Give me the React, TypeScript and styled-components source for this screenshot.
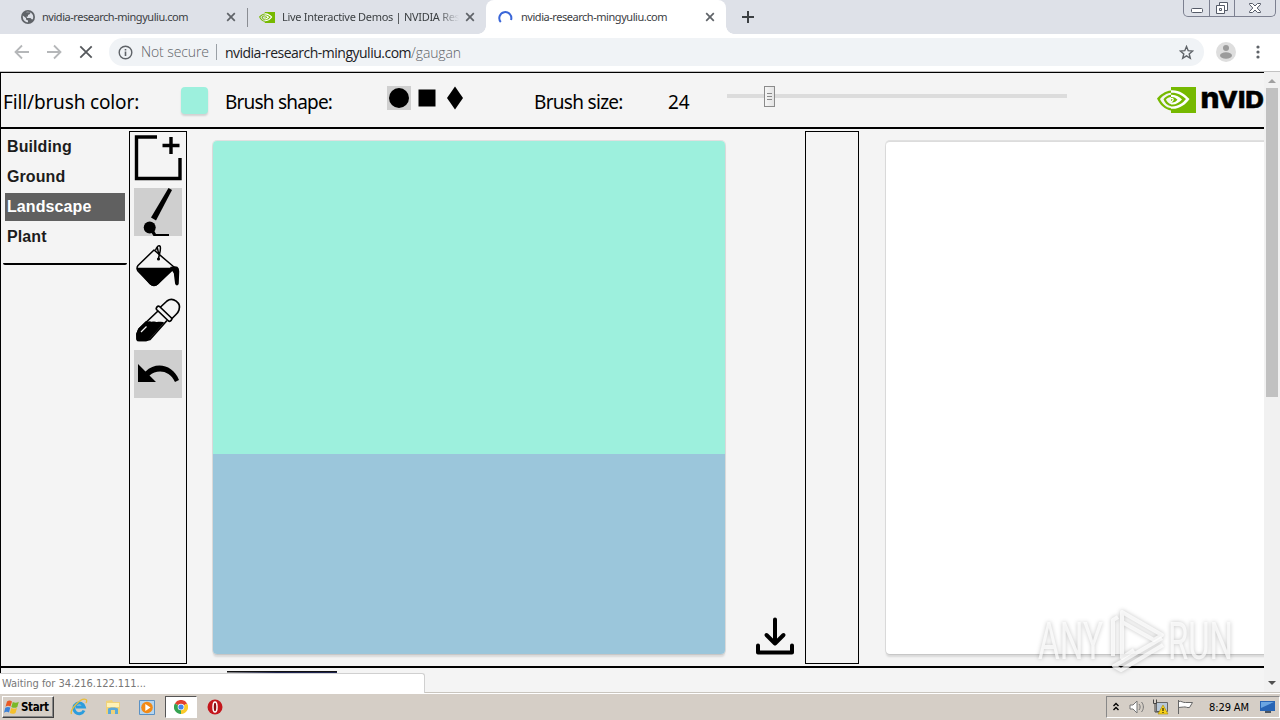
import React from 'react';
import styled, { createGlobalStyle } from 'styled-components';

const GlobalStyle = createGlobalStyle`
    * {
        box-sizing: border-box;
    }

    body {
        margin: 0;
        overflow: hidden;
        font-family: 'DejaVu Sans Condensed', 'DejaVu Sans', sans-serif;
    }

    svg {
        display: block;
        flex: none;
    }
`;

const Screen = styled.div`
    position: relative;
    width: 1280px;
    height: 720px;
    display: flex;
    flex-direction: column;
    overflow: hidden;
    background: #f4f4f4;
`;

/* browser chrome */

const TabStrip = styled.div`
    height: 34px;
    flex: none;
    display: flex;
    background: #dee1e8;
`;

const Tab = styled.div<{ $width: number; $active?: boolean; $pad: number }>`
    position: relative;
    width: ${(p) => p.$width}px;
    height: 34px;
    padding: 0 11px 0 ${(p) => p.$pad}px;
    display: flex;
    align-items: center;
    background: ${(p) => (p.$active ? '#fff' : 'transparent')};
    border-radius: 8px 8px 0 0;

    &::before,
    &::after {
        content: '';
        display: ${(p) => (p.$active ? 'block' : 'none')};
        position: absolute;
        bottom: 0;
        width: 8px;
        height: 8px;
    }

    &::before {
        left: -8px;
        background: radial-gradient(circle at 0 0, transparent 7.5px, #fff 8px);
    }

    &::after {
        right: -8px;
        background: radial-gradient(circle at 100% 0, transparent 7.5px, #fff 8px);
    }
`;

const TabTitle = styled.span<{ $fade?: boolean; $spacing: number }>`
    flex: 1;
    margin-left: 7px;
    overflow: hidden;
    white-space: nowrap;
    font-family: 'Noto Sans', sans-serif;
    font-size: 11px;
    line-height: 16px;
    letter-spacing: ${(p) => p.$spacing}px;
    color: #3c4043;
    ${(p) => p.$fade && 'mask-image: linear-gradient(90deg, #000 88%, transparent); margin-right: 6px;'}
`;

const TabDivider = styled.div`
    width: 1px;
    height: 19px;
    margin-top: 8px;
    background: #8a8d93;
`;

const NewTab = styled.div`
    display: flex;
    align-items: center;
    padding-left: 16px;
`;

const WindowControls = styled.div`
    display: flex;
    width: 93px;
    height: 17px;
    margin: 0 4px 0 auto;
    border: 1px solid #7c8090;
    border-top: 0;
    border-radius: 0 0 5px 5px;
`;

const WindowButton = styled.div<{ $width: number }>`
    width: ${(p) => p.$width}px;
    display: flex;
    justify-content: center;

    & + & {
        border-left: 1px solid #7c8090;
    }
`;

const Toolbar = styled.div`
    height: 38px;
    flex: none;
    display: flex;
    align-items: center;
    gap: 16px;
    padding: 0 14px 1px 14px;
    background: #fff;
    border-bottom: 1px solid #c2c2c2;
`;

const Omnibox = styled.div`
    width: 1095px;
    height: 28px;
    display: flex;
    align-items: center;
    margin-left: -1px;
    padding: 0 10px 0 9px;
    border-radius: 14px;
    background: #f0f3f6;
    font-family: 'Open Sans', sans-serif;
    font-size: 14px;
    font-weight: 300;
    letter-spacing: -0.1px;
    color: #5f6368;
    white-space: nowrap;

    b {
        font-weight: 400;
        color: #202124;
        letter-spacing: -0.5px;
    }
`;

const NotSecure = styled.span`
    margin-left: 8px;
    padding-right: 7px;
    border-right: 1px solid #9aa0a6;
    margin-right: 8px;
    line-height: 16px;
`;

const Url = styled.span`
    flex: 1;
`;

const ToolbarEnd = styled.div`
    display: flex;
    align-items: center;
    gap: 18px;
    margin-left: -4px;
`;

/* page */

const Viewport = styled.div`
    height: 620px;
    flex: none;
    display: flex;
`;

const Page = styled.div`
    width: 1264px;
    height: 620px;
    overflow: hidden;
    border-left: 1px solid #000;
    border-top: 1px solid #000;
    background: #f4f4f4;
`;

const Controls = styled.div`
    height: 56px;
    display: flex;
    border-bottom: 2px solid #000;
`;

const ControlLabel = styled.span<{ $width: number; $spacing?: number }>`
    width: ${(p) => p.$width}px;
    padding: 15px 0 0 2px;
    flex: none;
    font-family: 'Noto Sans', sans-serif;
    font-size: 19px;
    line-height: 28px;
    letter-spacing: ${(p) => p.$spacing ?? 0}px;
    white-space: nowrap;
    color: #000;
`;

const Swatch = styled.div`
    width: 27px;
    height: 27px;
    margin: 14px 15px 0 0;
    flex: none;
    border-radius: 4px;
    background: #9df0dd;
    box-shadow: 0 2px 2px rgba(0, 0, 0, 0.14);
`;

const Shapes = styled.div`
    display: flex;
    width: 145px;
    padding-top: 13px;
    gap: 4px;
`;

const Shape = styled.div<{ $selected?: boolean }>`
    width: 24px;
    height: 24px;
    background: ${(p) => (p.$selected ? '#cfcfcf' : 'transparent')};
`;

const Slider = styled.div`
    width: 340px;
    height: 22px;
    margin: 12px 0 0 26px;
    display: flex;
    align-items: center;
    flex: none;
    background: linear-gradient(#dcdcdc, #dcdcdc) center / 100% 4px no-repeat;
`;

const SliderThumb = styled.div`
    width: 11px;
    height: 21px;
    margin-left: 37px;
    padding: 6px 2px;
    display: flex;
    flex-direction: column;
    justify-content: space-between;
    border: 1px solid #8b8b8b;
    background: linear-gradient(90deg, #f6f6f6, #e4e4e4);

    i {
        height: 1px;
        background: #8b8b8b;
    }
`;

const Brand = styled.div`
    margin: 14px 0 0 90px;
`;

const Workspace = styled.div`
    height: 539px;
    display: flex;
    border-bottom: 2px solid #000;
`;

const Categories = styled.div`
    width: 124px;
    height: 134px;
    margin: 2px 2px 0 2px;
    padding: 2px 2px 0;
    flex: none;
    border-bottom: 2px solid #000;
    border-radius: 2px;
`;

const Category = styled.div<{ $selected?: boolean }>`
    height: 28px;
    margin-bottom: 2px;
    padding-left: 2px;
    font: bold 16px/27px 'Liberation Sans', Arial, sans-serif;
    letter-spacing: 0.1px;
    color: ${(p) => (p.$selected ? '#fff' : '#1c1c1c')};
    background: ${(p) => (p.$selected ? '#606060' : 'transparent')};
`;

const ToolColumn = styled.div<{ $width: number }>`
    width: ${(p) => p.$width}px;
    height: 533px;
    margin-top: 2px;
    padding: 2px 4px;
    display: flex;
    flex-direction: column;
    gap: 6px;
    flex: none;
    border: 1px solid #000;
`;

const Tool = styled.div<{ $selected?: boolean }>`
    width: 48px;
    height: 48px;
    background: ${(p) => (p.$selected ? '#cfcfcf' : 'transparent')};
`;

const Canvas = styled.div<{ $left: number; $empty?: boolean }>`
    width: 512px;
    height: 513px;
    margin: 12px 0 0 ${(p) => p.$left}px;
    flex: none;
    border-radius: 4px;
    background: ${(p) => (p.$empty ? '#fff' : 'linear-gradient(#9df0dd 313px, #9bc6db 313px)')};
    box-shadow: 0 3px 2px rgba(0, 0, 0, 0.11), 0 0 0 1px rgba(0, 0, 0, 0.08);
    ${(p) => p.$empty && 'border-top: 1px solid #dcdcdc;'}
`;

const Download = styled.div`
    width: 80px;
    padding: 486px 0 0 29px;
    flex: none;
`;

const Thumbs = styled.div`
    height: 30px;
    padding: 3px 0 0 226px;
`;

const Thumb = styled.div`
    width: 110px;
    height: 30px;
    border-top: 1px solid #111;
    background: linear-gradient(90deg, #888, #1d2450 45%);
`;

const Scrollbar = styled.div`
    width: 16px;
    display: flex;
    flex-direction: column;
    align-items: center;
    justify-content: space-between;
    background: #f1f1f1;
`;

const ScrollThumb = styled.div`
    width: 12px;
    height: 309px;
    margin-bottom: auto;
    background: #c1c1c1;
`;

const Status = styled.div`
    position: absolute;
    left: 0;
    top: 673px;
    width: 425px;
    height: 20px;
    padding-left: 2px;
    border: 1px solid #d0d0d0;
    border-width: 1px 1px 0 0;
    border-radius: 0 3px 0 0;
    background: #fff;
    font-size: 11px;
    line-height: 19px;
    letter-spacing: -0.04px;
    color: #777;
`;

/* desktop */

const Taskbar = styled.div`
    height: 28px;
    flex: none;
    display: flex;
    align-items: center;
    padding: 3px 0 2px 2px;
    border-top: 1px solid #c9c5be;
    box-shadow: inset 0 1px 0 #fff;
    background: #d5cec6;
`;

const StartButton = styled.div`
    width: 52px;
    height: 22px;
    display: flex;
    align-items: center;
    gap: 1px;
    padding-left: 1px;
    border: 1px solid;
    border-color: #fff #404040 #404040 #fff;
    box-shadow: inset -1px -1px 0 #888;
    font: bold 11.5px 'DejaVu Sans Condensed', 'DejaVu Sans', sans-serif;
    letter-spacing: -0.35px;
    color: #000;
`;

const Launchers = styled.div`
    display: flex;
    align-items: center;
    margin-left: 8px;
`;

const Launcher = styled.div<{ $open?: boolean }>`
    width: ${(p) => (p.$open ? 32 : 34)}px;
    height: 22px;
    display: flex;
    align-items: center;
    justify-content: center;
    ${(p) => p.$open && 'background: #fff; border: 1px solid; border-color: #555 #fff #fff #555; margin: 0 1px;'}
`;

const Tray = styled.div`
    width: 174px;
    height: 22px;
    margin: 0 0 0 auto;
    display: flex;
    align-items: center;
    border: 1px solid;
    border-color: #888 #fff #fff #888;
    color: #000;
`;

const Clock = styled.span`
    width: 50px;
    margin-left: 9px;
    flex: none;
    font-size: 11px;
    letter-spacing: -0.1px;
    white-space: nowrap;
`;

const Watermark = styled.svg`
    position: absolute;
    left: 1030px;
    top: 600px;
    filter: drop-shadow(0 0 2px rgba(0, 0, 0, 0.3));
`;

const CloseIcon = () => (
    <svg width='10' height='10' viewBox='0 0 10 10'>
        <path d='M1.2 1.2l7.6 7.6M8.8 1.2L1.2 8.8' stroke='#5f6368' strokeWidth='1.7' />
    </svg>
);

const Globe = () => (
    <svg width='14' height='14' viewBox='0 0 14 14'>
        <circle cx='7' cy='7' r='7' fill='#5f6368' />
        <path d='M1.8 5.5L5 8v1.5l2 1v1.8C4 12.3 1.5 10 1.8 5.5zM5 2.200h4.500L9 4 7 5v1.500H5.500L6 8h3.500l1.500 1.500 1-.5c.8-2.500-.2-5-2-6.200C8.500 1.500 6.200 1.500 5 2.200z' fill='#dee1e8' />
    </svg>
);

// The eye mark, used for the favicon and the page header.
const EyeMark = ({ width, height }: { width: number; height: number }) => (
    <svg width={width} height={height} viewBox='0 0 39 26' preserveAspectRatio='none'>
        <path d='M14 0h25v26H14z' fill='#76b900' />
        <path d='M14 3.500C8 4 3 8 0 11.500 3 18 8 22.500 14 23.500v-2.200C9 20.500 5 16.500 3 12c2.500-3 6.500-6 11-6.300z' fill='#76b900' />
        <path d='M14 7.800c-3.500.4-6.200 2.700-7.500 4.500C7.500 15.500 10 18.500 14 19.300v-2C11.500 16.500 9.700 14.500 9 12.500c1.200-1.500 3-2.500 5-2.500z' fill='#76b900' />
        <path d='M14 3.200c8-.6 15 3.800 19.500 9.300-2.500 3.500-5 5.500-8 7l7 3.500 3-2.500-3-2c2-1.500 3.500-3.500 4.500-5.500l-1.500-1.500z' fill='#76b900' />
        <path d='M14 3.200c8-.6 14 3.800 18.500 8.800-4 5.500-10 10.500-18.500 9.800v-2.300c7 .5 12-3.700 15-7.400-4-4-9-6.800-15-6.400z' fill='#fff' />
        <path d='M14 7.800c5-.3 8.500 2 11 4.700-3 3.200-6.500 5.700-11 5v-2.200c3 .6 5-.9 6.500-2.600-1.500-1.500-3.500-3-6.500-2.700z' fill='#fff' />
        <path d='M14 12c1.500-1.500 3 .5 1.500 1.700L14 15' fill='none' stroke='#fff' strokeWidth='1.300' />
    </svg>
);

const categories = ['Building', 'Ground', 'Landscape', 'Plant'];

const App = () => {
    const selected = 'Landscape';

    return (
        <Screen>
            <GlobalStyle />
            <TabStrip>
                <Tab $width={247} $pad={21}>
                    <Globe />
                    <TabTitle $spacing={-0.46}>nvidia-research-mingyuliu.com</TabTitle>
                    <CloseIcon />
                </Tab>
                <TabDivider />
                <Tab $width={238} $pad={11}>
                    <EyeMark width={16} height={11} />
                    <TabTitle $fade $spacing={-0.3}>Live Interactive Demos | NVIDIA Res</TabTitle>
                    <CloseIcon />
                </Tab>
                <Tab $width={240} $pad={12} $active>
                    <svg width='16' height='15' viewBox='0 0 16 15'>
                        <path d='M2.800 12A6 6 0 1 1 13 10' fill='none' stroke='#3a66d8' strokeWidth='2' />
                    </svg>
                    <TabTitle $spacing={-0.46}>nvidia-research-mingyuliu.com</TabTitle>
                    <CloseIcon />
                </Tab>
                <NewTab>
                    <svg width='12' height='12' viewBox='0 0 12 12'>
                        <path d='M6 0v12M0 6h12' stroke='#3c4043' strokeWidth='2' />
                    </svg>
                </NewTab>
                <WindowControls>
                    <WindowButton $width={25}>
                        <svg width='14' height='16'>
                            <rect x='1.500' y='8.500' width='11' height='4' rx='1' fill='#fff' stroke='#555b68' />
                        </svg>
                    </WindowButton>
                    <WindowButton $width={25}>
                        <svg width='14' height='16'>
                            <path d='M4.500 2.500h8v8h-8z' fill='#fff' stroke='#555b68' />
                            <path d='M1.500 5.500h8v8h-8z' fill='#fff' stroke='#555b68' />
                            <path d='M4.500 8.500h2v2h-2z' fill='none' stroke='#555b68' />
                        </svg>
                    </WindowButton>
                    <WindowButton $width={41}>
                        <svg width='14' height='16'>
                            <path d='M1.500 3.500h3L7 6l2.500-2.500h3v1L9.200 8l3.300 3.500v1h-3L7 10l-2.500 2.500h-3v-1L4.800 8 1.500 4.500z' fill='#fff' stroke='#555b68' />
                        </svg>
                    </WindowButton>
                </WindowControls>
            </TabStrip>

            <Toolbar>
                <svg width='16' height='16' viewBox='0 0 16 16' fill='none' stroke='#b5b7b9' strokeWidth='1.800'>
                    <path d='M15 8H2M8 1.500L1.500 8 8 14.500' />
                </svg>
                <svg width='16' height='16' viewBox='0 0 16 16' fill='none' stroke='#b5b7b9' strokeWidth='1.800'>
                    <path d='M1 8h13M8 1.500L14.500 8 8 14.500' />
                </svg>
                <svg width='16' height='16' viewBox='0 0 16 16' stroke='#55585c' strokeWidth='1.800'>
                    <path d='M2.300 2.300l11.400 11.400M13.700 2.300L2.300 13.700' />
                </svg>
                <Omnibox>
                    <svg width='15' height='15' viewBox='0 0 15 15'>
                        <circle cx='7.500' cy='7.500' r='6.300' fill='none' stroke='#5f6368' strokeWidth='1.400' />
                        <path d='M7.500 6.500V11M7.500 4v1.500' stroke='#5f6368' strokeWidth='1.600' />
                    </svg>
                    <NotSecure>Not secure</NotSecure>
                    <Url>
                        <b>nvidia-research-mingyuliu.com</b>/gaugan
                    </Url>
                    <svg width='15' height='15' viewBox='0 0 15 15'>
                        <path d='M7.500 1.500l1.700 4.200 4.500.3-3.500 2.900 1.100 4.400-3.800-2.400-3.800 2.400 1.100-4.400L1.300 6l4.500-.3z' fill='none' stroke='#5f6368' strokeWidth='1.400' />
                    </svg>
                </Omnibox>
                <ToolbarEnd>
                    <svg width='20' height='20' viewBox='0 0 20 20'>
                        <circle cx='10' cy='10' r='10' fill='#dedede' />
                        <circle cx='10' cy='6' r='3' fill='#9b9b9b' />
                        <ellipse cx='10' cy='13.500' rx='6' ry='3.200' fill='#9b9b9b' />
                    </svg>
                    <svg width='10' height='16' fill='#5f6368'>
                        <circle cx='4' cy='3' r='1.600' />
                        <circle cx='4' cy='8' r='1.600' />
                        <circle cx='4' cy='13' r='1.600' />
                    </svg>
                </ToolbarEnd>
            </Toolbar>

            <Viewport>
                <Page>
                    <Controls>
                        <ControlLabel $width={180} $spacing={-0.15}>Fill/brush color:</ControlLabel>
                        <Swatch />
                        <ControlLabel $width={164} $spacing={-0.8}>Brush shape:</ControlLabel>
                        <Shapes>
                            <Shape $selected>
                                <svg width='24' height='24'><circle cx='12' cy='12' r='10' /></svg>
                            </Shape>
                            <Shape>
                                <svg width='24' height='24'><path d='M3.500 3.500h17v17h-17z' /></svg>
                            </Shape>
                            <Shape>
                                <svg width='24' height='24'><path d='M12 .5L20 12l-8 11.500L4 12z' /></svg>
                            </Shape>
                        </Shapes>
                        <ControlLabel $width={134} $spacing={-0.7}>Brush size:</ControlLabel>
                        <ControlLabel $width={35}>24</ControlLabel>
                        <Slider>
                            <SliderThumb>
                                <i />
                                <i />
                                <i />
                            </SliderThumb>
                        </Slider>
                        <Brand>
                            <svg width='107' height='27' viewBox='0 0 107 27'>
                                <EyeMark width={39} height={26} />
                                <g fontFamily='Inter, sans-serif' fontWeight='800' stroke='#000' strokeWidth='.5'>
                                    <text x='43.500' y='21' fontSize='29.500' textLength='19' lengthAdjust='spacingAndGlyphs'>n</text>
                                    <text x='61' y='21' fontSize='22.500' textLength='46' lengthAdjust='spacingAndGlyphs'>VID</text>
                                </g>
                            </svg>
                        </Brand>
                    </Controls>

                    <Workspace>
                        <Categories>
                            {categories.map((name) => (
                                <Category key={name} $selected={name === selected}>{name}</Category>
                            ))}
                        </Categories>
                        <ToolColumn $width={58}>
                            <Tool>
                                <svg width='48' height='48' fill='none' stroke='#000'>
                                    <path d='M23 3H2.500v41.500H46V24' strokeWidth='3.400' />
                                    <path d='M37 3v17M28.500 11.500h17' strokeWidth='3.400' />
                                </svg>
                            </Tool>
                            <Tool $selected>
                                <svg width='48' height='48'>
                                    <path d='M34.500 0l3.500 2-16 30.500-5-3z' />
                                    <circle cx='15.700' cy='39.500' r='6' />
                                    <path d='M17 44l3-1.500 2 3.500h13v2H19.500z' />
                                </svg>
                            </Tool>
                            <Tool>
                                <svg width='48' height='48' fill='none' stroke='#000' strokeWidth='1.500' strokeLinejoin='round'>
                                    <path d='M20 8L4 23.500c-1.500 2-1 4 0 5.500l12 12.500c2 2.500 6 2.500 8 0l16-16.500z' />
                                    <path d='M3.500 26.500H40L24 41.500c-2 2.500-6 2.500-8 0z' fill='#000' />
                                    <path d='M37 25.500c6-1.500 7.500 0 7.500 4l-.5 12c-.3 1.500-2 1.500-2.200 0L40.500 31z' fill='#000' />
                                    <path d='M21.500 8.500c1-4 3.500-6 4.700-4 1 3-.7 7-1.700 12M23 4.500c1 2.500.5 4 2 8' />
                                    <circle cx='24.500' cy='17' r='.8' fill='#000' />
                                </svg>
                            </Tool>
                            <Tool>
                                <svg width='48' height='48' fill='none' stroke='#000' strokeWidth='1.700' strokeLinejoin='round'>
                                    <path d='M26 11.500l7-6.500c6-4.500 14.500 2 12 9-.6 2-2 3.500-3 4.500l-6 6z' />
                                    <path d='M22.500 13.500c-1-1.500 1-4 3-3l12 11.500c1 1.500-1 4-3 3z' fill='#f4f4f4' />
                                    <path d='M24 15L5 33l-2 5v5l2 1.500h7l4-1 17-19' />
                                    <path d='M12 26c2 1 2.500-.5 4.500.3 2 1 3-.7 5 .3 2 .8 4-.7 7.500.2L15 42.500l-3 2H3.500L3 38l2-5z' fill='#000' />
                                    <path d='M12.500 30.500L7 36' stroke='#f4f4f4' strokeWidth='1.200' />
                                </svg>
                            </Tool>
                            <Tool $selected>
                                <svg width='48' height='48'>
                                    <path d='M4 14v18h18l-6.500-6.500c7-6.500 20-6 25.500 6.500l4-2C39 15 22.500 11 11.500 21.500z' />
                                </svg>
                            </Tool>
                        </ToolColumn>
                        <Canvas $left={26} />
                        <Download>
                            <svg width='42' height='42' fill='none' stroke='#000' strokeWidth='4' strokeLinejoin='round' strokeLinecap='round'>
                                <path d='M21 4.500v24M12.500 20L21 28.500 29.500 20' />
                                <path d='M4 30.500v7h34v-7' />
                            </svg>
                        </Download>
                        <ToolColumn $width={54} />
                        <Canvas $left={27} $empty />
                    </Workspace>
                    <Thumbs>
                        <Thumb />
                    </Thumbs>
                </Page>
                <Scrollbar>
                    <svg width='16' height='16'><path d='M4 11l4-4 4 4z' fill='#a0a0a0' /></svg>
                    <ScrollThumb />
                    <svg width='16' height='16'><path d='M4 5l4 4 4-4z' fill='#505050' /></svg>
                </Scrollbar>
            </Viewport>

            <Taskbar>
                <StartButton>
                    <svg width='16' height='16' viewBox='0 0 16 16'>
                        <path d='M3 2.500c2-1.500 3.500-1 5 0L6.500 7.500c-2-1-3.500-.8-5 .3z' fill='#ea5a24' />
                        <path d='M8.800 3c2 1 4 1 6-.3L13.300 8c-2 1.300-4 1-6 0z' fill='#7ab929' />
                        <path d='M1.300 8.800c2-1.200 3.500-1 5-.2L5 13.500c-1.500-1-3.300-1-5 .2z' fill='#3c82d8' />
                        <path d='M7.200 9c2 1 4 1 5.800 0l-1.500 5c-2 1.200-4 1-5.700 0z' fill='#f5c02c' />
                    </svg>
                    Start
                </StartButton>
                <Launchers>
                    <Launcher>
                        <svg width='18' height='18' viewBox='0 0 18 18' fill='none'>
                            <path d='M14 12.500A5.300 5.300 0 1 1 14.300 9H6' stroke='#2b9ddd' strokeWidth='3' />
                            <path d='M1.500 16C-.5 12 11-1 16 1.500c1 .7.800 2 0 3.500' stroke='#e9bd38' strokeWidth='1.300' />
                        </svg>
                    </Launcher>
                    <Launcher>
                        <svg width='18' height='18' viewBox='0 0 18 18'>
                            <path d='M2 3l6-1 1 2h7v12H2z' fill='#efd27a' />
                            <path d='M3 5h12v4H3z' fill='#fff2b5' />
                            <path d='M4 16v-5c0-2 10-2 10 0v5h-3v-4H7v4z' fill='#5ba9d9' />
                        </svg>
                    </Launcher>
                    <Launcher>
                        <svg width='17' height='17' viewBox='0 0 17 17'>
                            <path d='M.5 1.500h15v14H.5z' fill='#b5d5ef' stroke='#5a91c4' />
                            <circle cx='8' cy='8.500' r='5.800' fill='#f28a16' />
                            <path d='M6.300 5L11.500 8.500l-5.200 3.500z' fill='#fff' />
                        </svg>
                    </Launcher>
                    <Launcher $open>
                        <svg width='14' height='14' viewBox='0 0 14 14'>
                            <path d='M7 7L.9 3.500A7 7 0 0 1 13.100 3.500z' fill='#e2402f' />
                            <path d='M7 7l6.100-3.500A7 7 0 0 1 7 14z' fill='#fbca29' />
                            <path d='M7 7v7A7 7 0 0 1 .9 3.500z' fill='#35a351' />
                            <circle cx='7' cy='7' r='3.300' fill='#fff' />
                            <circle cx='7' cy='7' r='2.600' fill='#4585ec' />
                        </svg>
                    </Launcher>
                    <Launcher>
                        <svg width='16' height='16' viewBox='0 0 16 16'>
                            <circle cx='8' cy='8' r='7.500' fill='#c4161c' />
                            <ellipse cx='8' cy='8' rx='2' ry='5' fill='#8c0c10' stroke='#fff' strokeWidth='1.500' />
                        </svg>
                    </Launcher>
                </Launchers>
                <Tray>
                    <svg width='18' height='18' fill='none' stroke='#000' strokeWidth='1.400'>
                        <path d='M6.500 8L9 5.500 11.500 8M6.500 12L9 9.500l2.500 2.500' />
                    </svg>
                    <svg width='25' height='18' fill='none' stroke='#777'>
                        <path d='M5 7h3l4-4v12l-4-4H5z' fill='#fff' />
                        <path d='M14 6c1.500 2 1.500 4 0 6M16.500 4c2.500 3 2.500 7 0 10' />
                    </svg>
                    <svg width='24' height='18'>
                        <path d='M6.500 4.500h11v9h-11z' fill='#b8c8d8' stroke='#666' />
                        <path d='M3.500 1.500v4h3v-4M5 5v9h4' fill='none' stroke='#444' />
                        <path d='M13 7l5 9H8z' fill='#f7d119' stroke='#a88a00' strokeWidth='.6' />
                        <path d='M13 10v3M13 14v1' stroke='#000' />
                    </svg>
                    <svg width='26' height='18' fill='#fff' stroke='#666'>
                        <path d='M4.500 2v14M4.500 3.500c3-1 4.500 1.500 7 1h7l-3 5c-2 .5-4-1-6-.5l-5 .5' />
                    </svg>
                    <Clock>8:29 AM</Clock>
                    <svg width='18' height='18' viewBox='0 0 18 18'>
                        <path d='M1 3h15v10H1z' fill='#2865b5' />
                        <path d='M2 4h13L2 10z' fill='#6ba6e2' />
                        <path d='M6 13h6v2H6z' fill='#4d5660' />
                    </svg>
                </Tray>
            </Taskbar>

            <Status>Waiting for 34.216.122.111...</Status>

            <Watermark width='210' height='80' viewBox='0 0 210 80'>
                <g fill='#fff' fillOpacity='.75' fontFamily='Roboto, sans-serif' fontSize='51'>
                    <text x='8' y='59' textLength='65' lengthAdjust='spacingAndGlyphs'>ANY</text>
                    <text x='138' y='59' textLength='65' lengthAdjust='spacingAndGlyphs'>RUN</text>
                </g>
                <g fill='none' stroke='#fff' strokeOpacity='.75' strokeWidth='4' strokeLinejoin='round'>
                    <path d='M92 25V12l40 23-8 5-32-18v36l12-8' />
                    <path d='M83 56V20l5-3M132 38L84 66l7 4 42-25' />
                </g>
            </Watermark>
        </Screen>
    );
};

export default App;
